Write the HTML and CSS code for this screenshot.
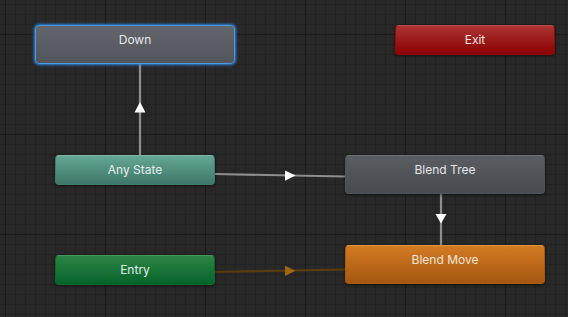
FILE: index.html
```html
<!DOCTYPE html>
<html>
<head>
<meta charset="utf-8">
<link rel="stylesheet" href="styles.css">
</head>
<body>
<div class="canvas">
  <svg class="edges" width="568" height="317" viewBox="0 0 568 317">
    <line x1="140" y1="64" x2="140" y2="155" class="edge"/>
    <polygon points="140,102 134.5,112.5 145.5,112.5" class="arrow"/>
    <line x1="215" y1="174" x2="345" y2="176.5" class="edge"/>
    <polygon points="285,170.5 295.5,175.6 285,180.7" class="arrow"/>
    <line x1="441" y1="194" x2="441" y2="245" class="edge"/>
    <polygon points="435.5,214 446.5,214 441,223.5" class="arrow"/>
    <line x1="215" y1="272" x2="345" y2="269.5" class="edge-entry"/>
    <polygon points="285,265.8 295.5,270.8 285,276" class="arrow-entry"/>
  </svg>
  <div class="node state selected" style="left:35px;top:25px">Down</div>
  <div class="node exit" style="left:395px;top:25px">Exit</div>
  <div class="node any" style="left:55px;top:155px">Any State</div>
  <div class="node state" style="left:345px;top:155px">Blend Tree</div>
  <div class="node default" style="left:345px;top:245px">Blend Move</div>
  <div class="node entry" style="left:55px;top:255px">Entry</div>
</div>
</body>
</html>
```
FILE: styles.css
```css
html, body {
  margin: 0;
  padding: 0;
  width: 568px;
  height: 317px;
  overflow: hidden;
}
body {
  background-color: #282828;
  font-family: Inter, "Noto Sans", sans-serif;
}
.canvas {
  position: relative;
  width: 568px;
  height: 317px;
  background-color: #282828;
  background-image:
    linear-gradient(to right, #1b1b1b 1px, transparent 1px),
    linear-gradient(to bottom, #1b1b1b 1px, transparent 1px),
    linear-gradient(to right, #222222 1px, transparent 1px),
    linear-gradient(to bottom, #222222 1px, transparent 1px);
  background-size: 100px 100px, 100px 100px, 10px 10px, 10px 10px;
  background-position: 5px 34px, 5px 34px, 5px 4px, 5px 4px;
}
.edges {
  position: absolute;
  left: 0;
  top: 0;
}
.edge {
  stroke: #8e8e8e;
  stroke-width: 2.2;
}
.arrow {
  fill: #ffffff;
}
.edge-entry {
  stroke: #5b3c0d;
  stroke-width: 2.2;
}
.arrow-entry {
  fill: #a0660f;
}
.node {
  position: absolute;
  box-sizing: border-box;
  width: 200px;
  height: 39px;
  border-radius: 4px;
  color: #e6e6e6;
  font-size: 12px;
  line-height: 28px;
  text-align: center;
  box-shadow: 0 1px 3px rgba(0,0,0,0.55);
}
.state {
  background: linear-gradient(to bottom, #5a5d62, #474a4f);
  border: 1px solid #505358;
  border-top-color: #6c6f74;
}
.selected {
  background: linear-gradient(to bottom, #63666c, #51545a);
  border: 1px solid #4a9ae6;
  box-shadow: 0 0 3px 1px #2f7fcf, 0 0 1px #5aa9f0;
}
.exit, .any, .entry {
  width: 160px;
  height: 30px;
}
.exit {
  background: linear-gradient(to bottom, #ab3333, #8c0101);
  border: 1px solid #900808;
  border-top-color: #bb4a4a;
  color: #ece2e2;
}
.any {
  background: linear-gradient(to bottom, #64a693, #3e7769);
  border: 1px solid #3f7a6b;
  border-top-color: #7cb8a6;
  color: #e8eeec;
}
.entry {
  background: linear-gradient(to bottom, #2c8545, #05632a);
  border: 1px solid #0a6a2e;
  border-top-color: #45955a;
  color: #e6eee8;
}
.default {
  background: linear-gradient(to bottom, #d37b24, #a6560f);
  border: 1px solid #a85a12;
  border-top-color: #e39445;
  color: #f2e6da;
}
```
